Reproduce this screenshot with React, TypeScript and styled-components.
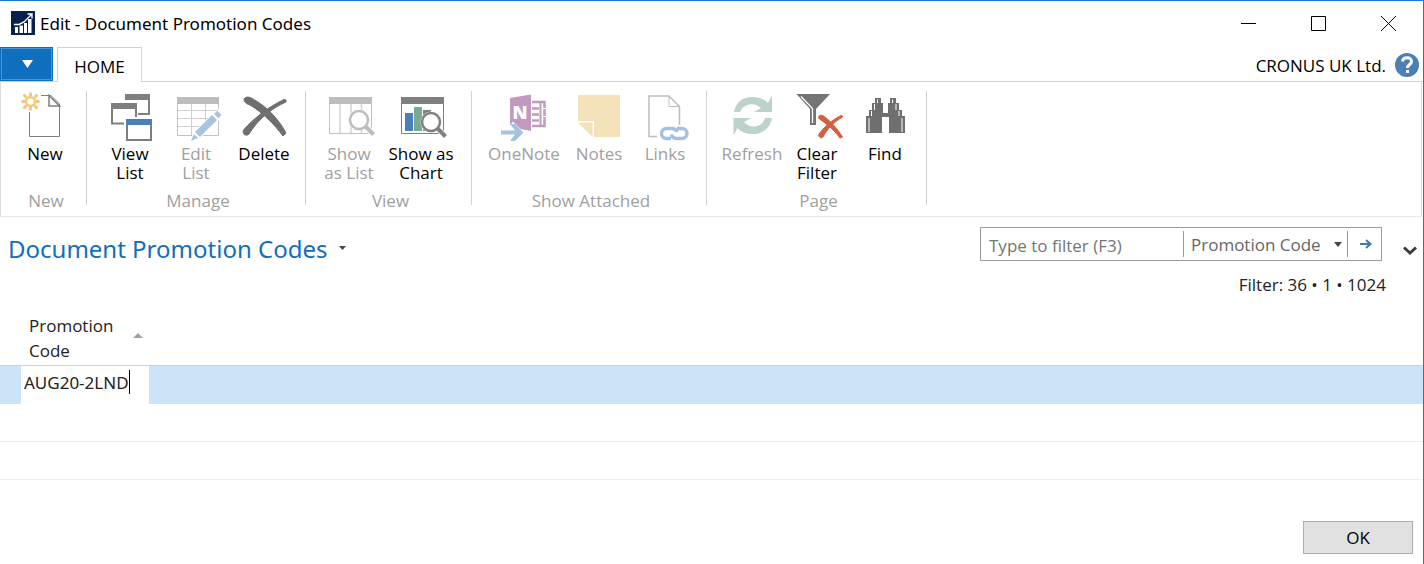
import React from "react";
import styled, { createGlobalStyle } from "styled-components";

const GlobalStyle = createGlobalStyle`
  *, *::before, *::after { box-sizing: border-box; }
  body {
    margin: 0;
    background: #fff;
    color: #000;
    font: 17px/19px "Open Sans", "Noto Sans", sans-serif;
  }
  button, input, select { font: inherit; color: inherit; border-radius: 0; margin: 0; }
`;

const Window = styled.div`
  display: flex;
  flex-direction: column;
  min-height: 100vh;
  border-top: 1px solid #1a7ad0;
  border-right: 1px solid #1a7ad0;
`;

const TitleBar = styled.header`
  display: flex;
  align-items: center;
  height: 46px;
  padding: 0 0 2px 11px;
`;

const WindowTitle = styled.h1`
  flex: 1;
  margin: 0;
  padding-left: 5px;
  font-family: "Noto Sans", sans-serif;
  font-size: 17px;
  font-weight: 400;
`;

const BareButton = styled.button`
  display: flex;
  align-items: center;
  justify-content: center;
  padding: 0;
  border: 0;
  background: none;
`;

const CaptionButton = styled(BareButton)`
  width: 70px;
  height: 42px;
`;

const TabRow = styled.nav`
  display: flex;
  align-items: stretch;
  height: 35px;
  border-bottom: 1px solid #d2d2d2;
`;

const AppMenu = styled(BareButton)`
  width: 53px;
  padding-left: 2px;
  background: #106ebe;
  border: 1px solid #106ebe;
  box-shadow: inset 0 0 0 1px #4a94d6;
`;

const Tab = styled(BareButton)`
  width: 85px;
  height: 35px;
  margin-left: 4px;
  padding-top: 2px;
  background: #fff;
  border: 1px solid #d2d2d2;
  border-bottom: 0;
`;

const Company = styled.span`
  margin-left: auto;
  padding: 9px 8px 0 0;
`;

const HelpButton = styled(BareButton)`
  width: 26px;
  height: 35px;
  margin-right: 3px;
`;

const Ribbon = styled.div`
  display: flex;
  height: 135px;
  padding: 9px 0 11px 1px;
  margin-right: 1px;
  border: 1px solid #dcdcdc;
  border-top: 0;
  border-bottom-color: #e9e9e9;
`;

const Group = styled.section<{ $width: number }>`
  display: flex;
  flex-direction: column;
  justify-content: space-between;
  width: ${(p) => p.$width}px;
  border-right: 1px solid #d2d2d2;
`;

const GroupButtons = styled.div`
  display: flex;
  padding-left: 10px;
`;

const GroupLabel = styled.h2`
  margin: 0 0 -3px;
  padding: 0 0 0 4px;
  font-size: 17px;
  line-height: 15px;
  font-weight: 400;
  text-align: center;
  color: #a0a0a0;
`;

const Action = styled.button<{ $width: number }>`
  display: flex;
  flex: none;
  flex-direction: column;
  align-items: center;
  width: ${(p) => p.$width}px;
  padding: 0;
  border: 0;
  background: none;
  white-space: pre;
  color: #000;

  &:disabled { color: #a0a0a0; }
  svg { overflow: visible; margin-bottom: 3px; }
`;

const PageHead = styled.div`
  display: flex;
  align-items: flex-start;
  padding: 10px 5px 0 8px;
`;

const PageTitle = styled.h2`
  margin: 0;
  padding-top: 5px;
  font-family: "Noto Sans", sans-serif;
  font-size: 24px;
  line-height: 34px;
  font-weight: 400;
  color: #106ebe;
`;

const TitleMenu = styled(BareButton)`
  width: 12px;
  height: 12px;
  margin: 15px 0 0 9px;
`;

const FilterBar = styled.form`
  display: flex;
  align-items: center;
  width: 402px;
  height: 34px;
  margin-left: auto;
  border: 1px solid #9a9a9a;
  color: #666;
`;

const FilterInput = styled.input`
  flex: 1;
  min-width: 0;
  height: 30px;
  padding: 2px 8px 0;
  border: 0;
  outline: 0;
  &::placeholder { color: #757575; opacity: 1; }
`;

const FieldPicker = styled.label`
  display: flex;
  align-items: center;
  width: 165px;
  height: 26px;
  padding-right: 5px;
  border: solid #9a9a9a;
  border-width: 0 1px;
`;

const FieldSelect = styled.select`
  flex: 1;
  min-width: 0;
  height: 26px;
  padding: 0 0 0 7px;
  border: 0;
  background: none;
  appearance: none;
`;

const GoButton = styled(BareButton)`
  width: 33px;
  height: 30px;
  padding-left: 2px;
`;

const Collapse = styled(BareButton)`
  width: 16px;
  height: 16px;
  margin: 15px 0 0 20px;
`;

const FilterInfo = styled.p`
  margin: 9px 37px 0 0;
  text-align: right;
  color: #222;
`;

const Table = styled.table`
  width: 100%;
  margin-top: 18px;
  border-collapse: collapse;
  table-layout: fixed;
`;

const Col = styled.col<{ $width?: number }>`
  width: ${(p) => (p.$width ? `${p.$width}px` : "auto")};
`;

const HeadCell = styled.th`
  height: 53px;
  padding: 0 0 0 8px;
  text-align: left;
  font-weight: 400;
  line-height: 25px;
  color: #222;
`;

const HeadContent = styled.div`
  display: flex;
  align-items: center;
  justify-content: space-between;
  padding-right: 6px;
  svg { margin-bottom: 6px; }
`;

const Row = styled.tr<{ $selected?: boolean }>`
  height: 38px;
  background: ${(p) => (p.$selected ? "#cce4f7" : "#fff")};
  border-bottom: ${(p) => (p.$selected ? "0" : "1px solid #ececec")};
`;

const HeadRow = styled.tr`
  border-bottom: 1px solid #cfd3d6;
`;

const Cell = styled.td<{ $editing?: boolean }>`
  height: 38px;
  padding: 0;
  background: ${(p) => (p.$editing ? "#fff" : "transparent")};
`;

const EditBox = styled.div`
  display: flex;
  align-items: flex-start;
  height: 38px;
  padding: 4px 0 0 3px;
`;

const EditInput = styled.input`
  field-sizing: content;
  height: 26px;
  padding: 0;
  border: 0;
  outline: 0;
  background: none;
  font-family: "Noto Sans", sans-serif;
  color: #222;
`;

const Caret = styled.span`
  width: 1px;
  height: 24px;
  background: #000;
`;

const Footer = styled.footer`
  display: flex;
  justify-content: flex-end;
  margin-top: auto;
  padding: 10px;
`;

const OkButton = styled.button`
  width: 110px;
  height: 33px;
  padding: 0;
  border: 1px solid #adadad;
  background: #e1e1e1;
`;

const Triangle = ({ w, h, color, up }: { w: number; h: number; color: string; up?: boolean }) => (
  <svg width={w} height={h} viewBox="0 0 10 10" preserveAspectRatio="none" aria-hidden="true">
    <path d={up ? "M0 10L5 0L10 10Z" : "M0 0H10L5 10Z"} fill={color} />
  </svg>
);

const Icon = ({ children }: { children: React.ReactNode }) => (
  <svg width="48" height="50" viewBox="0 0 48 50" fill="none" aria-hidden="true">
    {children}
  </svg>
);

const NewIcon = () => (
  <Icon>
    <path d="M20 4.5H30L38.500 13V45.500H8.500V21" stroke="#7f7f7f" />
    <path d="M28 4.500V15H38.500L28 4.500Z" fill="#fff" stroke="#7f7f7f" strokeWidth="1.500" />
    <circle cx="9.500" cy="10.500" r="4.400" stroke="#eec77c" strokeWidth="2.200" />
    <path d="M9.500 1.500V5M9.500 16V19.500M.5 10.500H4M15 10.500H18.500M2.500 3.500L5.500 6.500M13.500 14.500L16.500 17.500M2.500 17.500L5.500 14.500M13.500 6.500L16.500 3.500" stroke="#eec77c" strokeWidth="2.800" />
  </Icon>
);

const ViewListIcon = () => (
  <Icon>
    <path d="M19 3H44V9H19Z" fill="#7f7f7f" />
    <path d="M43 8V23H32" stroke="#7f7f7f" strokeWidth="2" />
    <path d="M5 12H31V18H5Z" fill="#7f7f7f" />
    <path d="M6 17V32.500H18M30 17V26" stroke="#7f7f7f" strokeWidth="2" />
    <path d="M21 33V49H45V33" stroke="#7f7f7f" strokeWidth="2" />
    <path d="M20 28H46V34H20Z" fill="#4a7fb8" />
  </Icon>
);

const EditListIcon = () => (
  <Icon>
    <path d="M5 6H47V13H5Z" fill="#bdbdbd" />
    <path d="M19.500 13V44M33.500 13V32M6 19.500H46M6 27.500H38M6 35.500H30" stroke="#cfcfcf" />
    <path d="M5.500 13V44.500H20M46.500 13V18M46.500 27V44.500H30" stroke="#c2c2c2" />
    <path d="M26 43L47 23" stroke="#fff" strokeWidth="9" />
    <path d="M23 41L40 24L45 29L28 46Z" fill="#a9c4e0" />
    <path d="M22 43L26 47L19 50Z" fill="#a9c4e0" />
    <path d="M42 23L44.500 20.500L45.500 20L49.500 24L46.500 27.500Z" fill="#a9c4e0" />
  </Icon>
);

const DeleteIcon = () => (
  <Icon>
    <path d="M4 8C6 5 10 6 13 8C27 16 38 27 46 42L43 45C34 33 23 22 10 14C6 13 4 11 4 8Z" fill="#6f6f6f" stroke="#6f6f6f" />
    <path d="M46 9L44 8.500C28 16 13 28 3.500 39C2 43 6 46 9 43C17 30 30 18 46 11Z" fill="#6f6f6f" stroke="#6f6f6f" />
  </Icon>
);

const Magnifier = ({ x, y, color }: { x: number; y: number; color: string }) => (
  <g>
    <circle cx={x} cy={y} r="10.500" fill="#fff" />
    <path d={`M${x + 7} ${y + 7}L${x + 15} ${y + 15}`} stroke="#fff" strokeWidth="6" />
    <circle cx={x} cy={y} r="9" stroke={color} strokeWidth="2.500" />
    <path d={`M${x + 6} ${y + 6}L${x + 14.5} ${y + 14.5}`} stroke={color} strokeWidth="4" />
  </g>
);

const ShowListIcon = () => (
  <Icon>
    <path d="M4 6H47V13H4Z" fill="#bdbdbd" />
    <path d="M4.500 13V42.500H46.500V13" stroke="#c2c2c2" />
    <path d="M15 13V42M26 13V42M36.500 13V42" stroke="#d4d4d4" strokeWidth="1.500" />
    <Magnifier x={34} y={29} color="#bdbdbd" />
  </Icon>
);

const ShowChartIcon = () => (
  <Icon>
    <path d="M4 6H47V13H4Z" fill="#7f7f7f" />
    <path d="M4.500 13V42.500H46.500V13" stroke="#7f7f7f" />
    <path d="M8 22H16V40H8Z" fill="#4a7fb8" />
    <path d="M17 16H25V40H17Z" fill="#79a895" />
    <path d="M26 19H34V40H26Z" fill="#7f7f7f" />
    <Magnifier x={34} y={31} color="#7f7f7f" />
  </Icon>
);

const OneNoteIcon = () => (
  <Icon>
    <path d="M10 7L31 3.500V40L10 36Z" fill="#c09bbf" />
    <text x="12.500" y="28" fontSize="18" fontWeight="800" fill="#fff">N</text>
    <path d="M32 11H44.500V35H32M32 17.500H39M32 23.500H39M32 29.500H39" stroke="#c09bbf" strokeWidth="2.500" />
    <path d="M40.500 11V35" stroke="#c09bbf" strokeWidth="2" />
    <path d="M42 17.500H47M42 25.500H47" stroke="#fff" />
    <path d="M9 41.500H21M11 33L20 41.500L11 50" stroke="#fff" strokeWidth="6" />
    <path d="M1 39.500H15L10 33H15L23.500 41.500L15 50H10L15 43.500H1Z" fill="#a5c1df" />
  </Icon>
);

const NotesIcon = () => (
  <Icon>
    <path d="M3 4H45V46H19V30H3Z" fill="#f5e2bb" />
    <path d="M3 31.500H17.500V46Z" fill="#f5e2bb" />
  </Icon>
);

const LinksIcon = () => (
  <Icon>
    <path d="M16 45.500H8V5H28L38.500 15.500V34" stroke="#bdbdbd" strokeWidth="1.500" />
    <path d="M28 5V15.500H38.500" stroke="#bdbdbd" />
    <path d="M30 47.500H25.500A5 5 0 0 1 25.500 37.500H31.500A5 5 0 0 1 36 41M36 37.500H41A5 5 0 0 1 41 47.500H35A5 5 0 0 1 30.500 43.500" stroke="#a5c1df" strokeWidth="3.500" />
  </Icon>
);

const RefreshIcon = () => (
  <Icon>
    <path d="M6 21C8 11 15 6 24 6C31 6 36 8 40 12L44 4.500V21H26L33 17C27 11 16 12 12 21Z" fill="#bbd3ca" />
    <path d="M44 27C42 38 34 43 25 43C18 43 13 41 9.500 37L5.500 44.500V27H23L16 31C22 38 34 37 37 27Z" fill="#bbd3ca" />
  </Icon>
);

const ClearFilterIcon = () => (
  <Icon>
    <path d="M3.500 3H37L23 18V34H17V18Z" fill="#747474" />
    <path d="M8 5.500L19.500 17.500V32" stroke="#fff" strokeWidth="1.300" />
    <path d="M26 25C28 23 31 25 32 26C38 31 44 37 49.500 46L47 47C42 40 35 34 28 29C26 28 25 27 26 25Z" fill="#d55f43" stroke="#d55f43" />
    <path d="M49.500 25L48 24.500C39 29 31 36 26 43C25 46 28 48 30 46C34 38 41 31 49.500 26Z" fill="#d55f43" stroke="#d55f43" />
  </Icon>
);

const FindIcon = () => (
  <Icon>
    <path d="M14 7H20V12H22V22H27V12H29V7H35V12H38V19H41V25H44V42H28V26H21V42H5V25H8V19H11V12H14Z" fill="#6f6f6f" />
    <path d="M16.500 8.500V12M13.500 13V19M10.500 20V25M8 27V41M31.500 8.500V12M35 13V19M38 20V25M41 27V41" stroke="#fff" />
    <path d="M23 21.500H26" stroke="#fff" />
  </Icon>
);

type ActionDef = { label: string; width: number; icon: React.ReactNode; disabled?: boolean };

const groups: { name: string; width: number; actions: ActionDef[] }[] = [
  { name: "New", width: 85, actions: [{ label: "New", width: 66, icon: <NewIcon /> }] },
  {
    name: "Manage",
    width: 219,
    actions: [
      { label: "View\nList", width: 66, icon: <ViewListIcon /> },
      { label: "Edit\nList", width: 66, icon: <EditListIcon />, disabled: true },
      { label: "Delete", width: 70, icon: <DeleteIcon /> },
    ],
  },
  {
    name: "View",
    width: 166,
    actions: [
      { label: "Show\nas List", width: 66, icon: <ShowListIcon />, disabled: true },
      { label: "Show as\nChart", width: 78, icon: <ShowChartIcon /> },
    ],
  },
  {
    name: "Show Attached",
    width: 235,
    actions: [
      { label: "OneNote", width: 84, icon: <OneNoteIcon />, disabled: true },
      { label: "Notes", width: 66, icon: <NotesIcon />, disabled: true },
      { label: "Links", width: 66, icon: <LinksIcon />, disabled: true },
    ],
  },
  {
    name: "Page",
    width: 220,
    actions: [
      { label: "Refresh", width: 70, icon: <RefreshIcon />, disabled: true },
      { label: "Clear\nFilter", width: 60, icon: <ClearFilterIcon /> },
      { label: "Find", width: 76, icon: <FindIcon /> },
    ],
  },
];

export default function App() {
  return (
    <>
      <GlobalStyle />
      <Window>
        <TitleBar>
          <svg width="24" height="24" viewBox="0 0 24 24" fill="none" aria-hidden="true">
            <path d="M0 0H24V24H0Z" fill="#08214c" />
            <path d="M4 16H7V22H4ZM8.500 14.500H12V22H8.500ZM13 12H16V22H13ZM17 8H20.500V22H17Z" fill="#fff" />
            <path d="M3 13.500H8L13 11L20 4M16.500 3H21V7.500" stroke="#fff" strokeWidth="1.400" />
          </svg>
          <WindowTitle>Edit - Document Promotion Codes</WindowTitle>
          <CaptionButton aria-label="Minimize">
            <svg width="15" height="15" viewBox="0 0 15 15"><path d="M0 7.500H15" stroke="#000" /></svg>
          </CaptionButton>
          <CaptionButton aria-label="Maximize">
            <svg width="15" height="15" viewBox="0 0 15 15"><path d="M.5.5H14.500V14.500H.5Z" fill="none" stroke="#000" /></svg>
          </CaptionButton>
          <CaptionButton aria-label="Close">
            <svg width="15" height="15" viewBox="0 0 15 15"><path d="M0 0L15 15M15 0L0 15" stroke="#000" /></svg>
          </CaptionButton>
        </TitleBar>

        <TabRow>
          <AppMenu aria-label="Application menu"><Triangle w={11} h={8} color="#fff" /></AppMenu>
          <Tab>HOME</Tab>
          <Company>CRONUS UK Ltd.</Company>
          <HelpButton aria-label="Help">
            <svg width="24" height="24" viewBox="0 0 24 24" aria-hidden="true">
              <circle cx="12" cy="12" r="12" fill="#4a7fb8" />
              <path d="M7.500 8.500C8 3.500 16.500 3.500 16.500 8.500C16.500 11.500 12.500 11.500 12.500 15" fill="none" stroke="#fff" strokeWidth="3" />
              <path d="M11 17H14V20H11Z" fill="#fff" />
            </svg>
          </HelpButton>
        </TabRow>

        <Ribbon>
          {groups.map((g) => (
            <Group key={g.name} $width={g.width}>
              <GroupButtons>
                {g.actions.map((a) => (
                  <Action key={a.label} $width={a.width} disabled={a.disabled}>
                    {a.icon}
                    {a.label}
                  </Action>
                ))}
              </GroupButtons>
              <GroupLabel>{g.name}</GroupLabel>
            </Group>
          ))}
        </Ribbon>

        <PageHead>
          <PageTitle>Document Promotion Codes</PageTitle>
          <TitleMenu aria-label="Page menu"><Triangle w={7} h={4} color="#444" /></TitleMenu>
          <FilterBar onSubmit={(e) => e.preventDefault()}>
            <FilterInput aria-label="Filter" placeholder="Type to filter (F3)" />
            <FieldPicker>
              <FieldSelect aria-label="Filter field">
                <option>Promotion Code</option>
              </FieldSelect>
              <Triangle w={8} h={5} color="#444" />
            </FieldPicker>
            <GoButton aria-label="Apply filter">
              <svg width="12" height="10" viewBox="0 0 12 10" fill="none" aria-hidden="true">
                <path d="M0 5H10M6 1L10.500 5L6 9" stroke="#3f78b5" strokeWidth="2" />
              </svg>
            </GoButton>
          </FilterBar>
          <Collapse aria-label="Expand filter pane">
            <svg width="14" height="9" viewBox="0 0 14 9" fill="none" aria-hidden="true">
              <path d="M1 1.500L7 7L13 1.500" stroke="#3c3c3c" strokeWidth="3" />
            </svg>
          </Collapse>
        </PageHead>
        <FilterInfo>Filter: 36 • 1 • 1024</FilterInfo>

        <Table>
          <colgroup>
            <Col $width={21} />
            <Col $width={128} />
            <Col />
          </colgroup>
          <thead>
            <HeadRow>
              <td />
              <HeadCell scope="col">
                <HeadContent>
                  <span>Promotion<br />Code</span>
                  <Triangle w={10} h={5} color="#a0a0a0" up />
                </HeadContent>
              </HeadCell>
              <td />
            </HeadRow>
          </thead>
          <tbody>
            <Row $selected>
              <Cell />
              <Cell $editing>
                <EditBox>
                  <EditInput aria-label="Promotion Code" defaultValue="AUG20-2LND" />
                  <Caret />
                </EditBox>
              </Cell>
              <Cell />
            </Row>
            <Row><Cell /><Cell /><Cell /></Row>
            <Row><Cell /><Cell /><Cell /></Row>
          </tbody>
        </Table>

        <Footer>
          <OkButton>OK</OkButton>
        </Footer>
      </Window>
    </>
  );
}
